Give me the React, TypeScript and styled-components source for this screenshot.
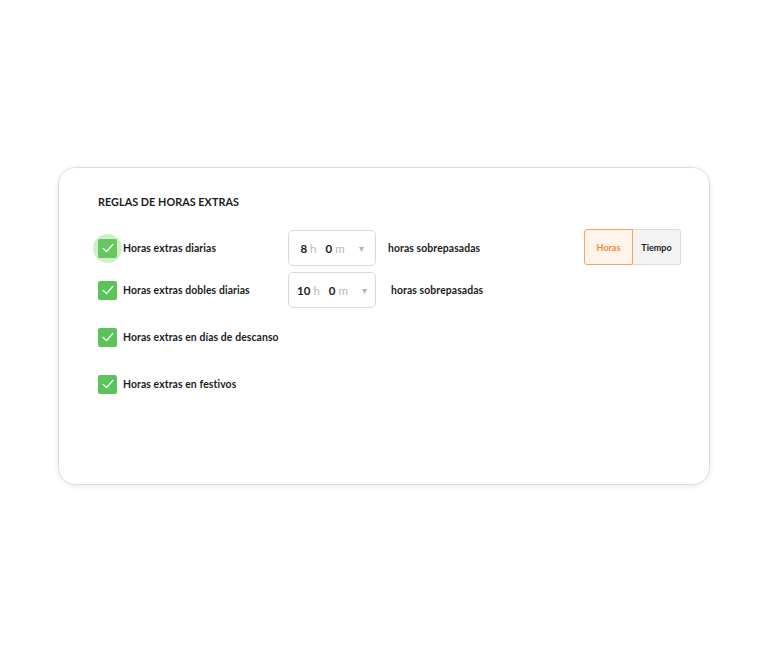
import styled, { createGlobalStyle } from "styled-components";

const GlobalStyle = createGlobalStyle`
  body {
    margin: 0;
    background: #ffffff;
    font-family: "Lato", "Noto Sans", sans-serif;
    color: #1c1c1c;
  }
`;

type Rule = {
  label: string;
  hours?: number;
  minutes?: number;
  focused?: boolean;
};

const rules: Rule[] = [
  { label: "Horas extras diarias", hours: 8, minutes: 0, focused: true },
  { label: "Horas extras dobles diarias", hours: 10, minutes: 0 },
  { label: "Horas extras en días de descanso" },
  { label: "Horas extras en festivos" },
];

function CheckIcon() {
  return (
    <svg width="14" height="14" viewBox="0 0 14 14" fill="none">
      <path
        d="M2.2 7.4 L5.6 10.6 L11.8 3.4"
        stroke="#ffffff"
        strokeWidth="1.4"
        strokeLinecap="round"
        strokeLinejoin="round"
      />
    </svg>
  );
}

export default function App() {
  return (
    <Page>
      <GlobalStyle />
      <Card>
        <Title>REGLAS DE HORAS EXTRAS</Title>
        <RuleList>
          {rules.map((rule, i) => (
            <Row key={rule.label} $tall={i >= 2}>
              <CheckLabel>
                <Checkbox $focused={rule.focused}>
                  <CheckIcon />
                </Checkbox>
                <Label>{rule.label}</Label>
              </CheckLabel>
              {rule.hours !== undefined && (
                <>
                  <TimeBox>
                    <Num>{rule.hours}</Num>
                    <Unit>h</Unit>
                    <Num $gap>{rule.minutes}</Num>
                    <Unit>m</Unit>
                    <Caret>▾</Caret>
                  </TimeBox>
                  <Suffix $shift={i === 1}>horas sobrepasadas</Suffix>
                </>
              )}
              {i === 0 && (
                <Toggle>
                  <ToggleButton $active>Horas</ToggleButton>
                  <ToggleButton>Tiempo</ToggleButton>
                </Toggle>
              )}
            </Row>
          ))}
        </RuleList>
      </Card>
    </Page>
  );
}

const Page = styled.div`
  width: 768px;
  height: 653px;
  padding: 167px 0 0 58px;
  box-sizing: border-box;
`;

const Card = styled.div`
  width: 652px;
  height: 318px;
  box-sizing: border-box;
  border: 1px solid #dedede;
  border-radius: 18px;
  box-shadow: 0 1px 5px rgba(0, 0, 0, 0.1);
  padding: 27px 28px 0 39px;
  display: flex;
  flex-direction: column;
`;

const Title = styled.h2`
  margin: 0;
  font-size: 10.8px;
  line-height: 14px;
  font-weight: 700;
  letter-spacing: 0.05px;
`;

const RuleList = styled.div`
  margin-top: 21px;
  display: flex;
  flex-direction: column;
  gap: 6px;
`;

const Row = styled.div<{ $tall?: boolean }>`
  display: flex;
  align-items: center;
  height: 36px;
  margin-top: ${(p) => (p.$tall ? "5px" : "0")};
`;

const CheckLabel = styled.div`
  width: 190px;
  display: flex;
  align-items: center;
  gap: 6px;
`;

const Checkbox = styled.span<{ $focused?: boolean }>`
  position: relative;
  width: 19px;
  height: 19px;
  border-radius: 2px;
  background: #5cc35a;
  display: flex;
  align-items: center;
  justify-content: center;
  flex-shrink: 0;

  &::before {
    content: "";
    display: ${(p) => (p.$focused ? "block" : "none")};
    position: absolute;
    left: -5px;
    top: -5px;
    width: 29px;
    height: 29px;
    border-radius: 50%;
    background: rgba(120, 205, 110, 0.35);
  }

  svg {
    position: relative;
  }
`;

const Label = styled.span`
  font-size: 10.4px;
  font-weight: 700;
  white-space: nowrap;
  letter-spacing: 0.1px;
`;

const TimeBox = styled.div`
  width: 88px;
  height: 36px;
  box-sizing: border-box;
  border: 1px solid #d9d9d9;
  border-radius: 5px;
  display: flex;
  align-items: center;
  justify-content: center;
  font-size: 11.5px;
`;

const Num = styled.span<{ $gap?: boolean }>`
  font-weight: 700;
  color: #1c1c1c;
  margin-left: ${(p) => (p.$gap ? "9px" : "0")};
`;

const Unit = styled.span`
  color: #b8b8b8;
  margin-left: 3px;
`;

const Caret = styled.span`
  color: #b3b3b3;
  font-size: 10px;
  margin-left: 14px;
`;

const Suffix = styled.span<{ $shift?: boolean }>`
  margin-left: ${(p) => (p.$shift ? "15px" : "12px")};
  font-size: 10.4px;
  font-weight: 700;
  letter-spacing: 0.1px;
`;

const Toggle = styled.div`
  margin-left: auto;
  display: flex;
  margin-top: -2px;
`;

const ToggleButton = styled.button<{ $active?: boolean }>`
  width: ${(p) => (p.$active ? "49px" : "48px")};
  height: 36px;
  box-sizing: border-box;
  font-family: inherit;
  font-size: 9px;
  font-weight: 700;
  padding: 0;
  cursor: pointer;
  border: 1px solid ${(p) => (p.$active ? "#f6a466" : "#dcdcdc")};
  background: ${(p) => (p.$active ? "#fff3ea" : "#f3f3f3")};
  color: ${(p) => (p.$active ? "#f28a3f" : "#1c1c1c")};
  border-radius: ${(p) => (p.$active ? "3px 0 0 3px" : "0 3px 3px 0")};
  border-left-width: ${(p) => (p.$active ? "1px" : "0")};
`;
